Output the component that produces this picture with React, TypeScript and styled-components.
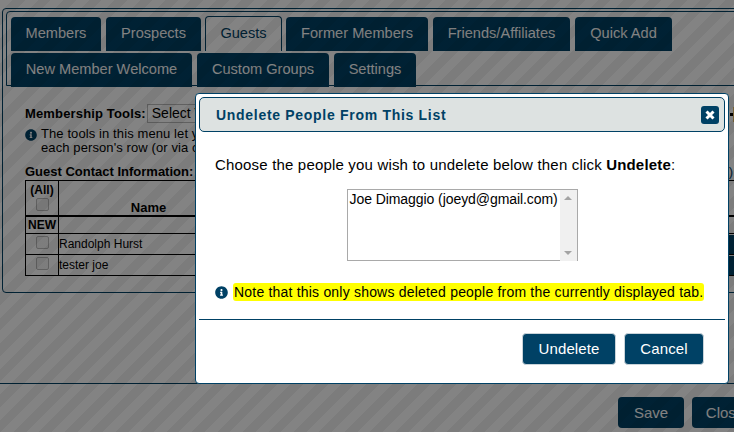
import React from 'react';
import styled, { createGlobalStyle } from 'styled-components';

const navy = '#004165';

const GlobalStyle = createGlobalStyle`
  html, body {
    margin: 0;
    padding: 0;
    width: 734px;
    height: 432px;
    overflow: hidden;
    background: #fff;
    font-family: "Liberation Sans", Arial, sans-serif;
  }
`;

const Page = styled.div`
  position: relative;
  width: 734px;
  height: 432px;
  overflow: hidden;
  box-sizing: border-box;
  padding-top: 8px;
`;

const OuterPanel = styled.div`
  margin-left: 2px;
  width: 760px;
  height: 285px;
  box-sizing: border-box;
  border: 1px solid ${navy};
  border-radius: 4px;
  padding: 2px 3px;
`;

const TabBar = styled.div`
  border: 1px solid ${navy};
  border-radius: 4px 4px 0 0;
  height: 75px;
  box-sizing: border-box;
  padding: 5px 4px 0;
  display: flex;
  flex-direction: column;
  gap: 2px;
`;

const TabRow = styled.div`
  display: flex;
  gap: 5px;
`;

const Tab = styled.div<{ $active?: boolean; $width: number }>`
  width: ${(p) => p.$width}px;
  height: ${(p) => (p.$active ? 35 : 34)}px;
  margin: ${(p) => (p.$active ? '-1px -1px 0 -1px' : '0')};
  box-sizing: border-box;
  display: flex;
  align-items: center;
  justify-content: center;
  padding-bottom: 2px;
  font-size: 14.6px;
  border-radius: 4px 4px 0 0;
  background: ${(p) => (p.$active ? '#fff' : navy)};
  color: ${(p) => (p.$active ? navy : '#fff')};
  border: ${(p) => (p.$active ? `1px solid ${navy}` : 'none')};
  border-bottom: none;
`;

const Content = styled.div`
  padding: 17px 0 0 19px;
  color: #000;
`;

const ToolsRow = styled.div`
  display: flex;
  align-items: center;
  height: 20px;
  font-size: 13px;
  font-weight: bold;
  letter-spacing: 0.15px;
`;

const FakeSelect = styled.div`
  margin-left: 1px;
  width: 100px;
  height: 17px;
  border: 1px solid #bbb;
  background: #fff;
  font-size: 14px;
  font-weight: normal;
  line-height: 17px;
  padding-left: 4px;
  letter-spacing: 0;
`;

const HelpText = styled.div`
  display: flex;
  gap: 4px;
  margin-top: 4px;
  font-size: 13px;
  line-height: 14px;
  letter-spacing: 0.1px;
  white-space: nowrap;
  svg {
    flex: none;
    margin-top: 2px;
  }
`;

const TableTitle = styled.div`
  margin-top: 9px;
  width: 708px;
  display: flex;
  justify-content: space-between;
  font-size: 13px;
  font-weight: bold;
  line-height: 16px;
`;

const TitleLink = styled.span`
  color: ${navy};
  font-weight: normal;
`;

const Table = styled.table`
  border-collapse: collapse;
  width: 720px;
  table-layout: fixed;
`;

const HeadCell = styled.th`
  border: 1px solid #000;
  border-bottom: 2px solid #000;
  height: 34px;
  padding: 0;
  font-size: 13px;
  line-height: 15px;
  vertical-align: bottom;
`;

const AllLabel = styled.div`
  font-size: 12px;
  line-height: 13px;
  margin-bottom: 1px;
`;

const Cell = styled.td<{ $center?: boolean; $bold?: boolean; $height: number }>`
  border: 1px solid #000;
  height: ${(p) => p.$height}px;
  padding: 0;
  text-align: ${(p) => (p.$center ? 'center' : 'left')};
  font-weight: ${(p) => (p.$bold ? 'bold' : 'normal')};
  font-size: 12px;
  line-height: 14px;
  vertical-align: ${(p) => (p.$center && !p.$bold ? 'top' : 'middle')};
`;

const Check = styled.span<{ $head?: boolean }>`
  display: block;
  width: 13px;
  height: 13px;
  margin: ${(p) => (p.$head ? '0 auto 4px' : '2px auto 0')};
  box-sizing: border-box;
  border: 1px solid #bbb;
  border-radius: 2px;
  background: #f4f4f4;
`;

const RowAction = styled.div`
  height: 19px;
  margin: 1px 0 0 0;
  background: ${navy};
`;

const PageFooter = styled.div`
  position: absolute;
  left: 0;
  right: 0;
  top: 383px;
  border-top: 1px solid ${navy};
  display: flex;
  gap: 8px;
  padding: 13px 0 0 618px;
`;

const FooterButton = styled.div<{ $width: number }>`
  flex: none;
  width: ${(p) => p.$width}px;
  height: 31px;
  background: ${navy};
  color: #fff;
  border-radius: 4px;
  font-size: 15px;
  display: flex;
  align-items: center;
  justify-content: center;
`;

const AddMark = styled.div`
  position: absolute;
  left: 730px;
  top: 113px;
  width: 8px;
  height: 3px;
  background: #000;
  &::after {
    content: '';
    position: absolute;
    left: 3px;
    top: -6px;
    width: 3px;
    height: 15px;
    background: #e6bd6a;
  }
`;

const Overlay = styled.div`
  position: absolute;
  inset: 0;
  background: repeating-linear-gradient(
    135deg,
    rgba(0, 0, 0, 0.485) 0 9px,
    rgba(0, 0, 0, 0.515) 9px 18px
  );
`;

const Modal = styled.div`
  position: absolute;
  left: 195px;
  top: 93px;
  width: 534px;
  height: 291px;
  box-sizing: border-box;
  background: #fff;
  border: 1px solid ${navy};
  border-radius: 4px;
  padding: 3px;
  display: flex;
  flex-direction: column;
`;

const ModalHeader = styled.div`
  height: 35px;
  flex: none;
  box-sizing: border-box;
  background: #dde2e1;
  border: 1px solid ${navy};
  border-radius: 5px;
  display: flex;
  align-items: center;
  justify-content: space-between;
  padding: 0 5px 0 16px;
`;

const ModalTitle = styled.div`
  color: ${navy};
  font-size: 14px;
  font-weight: bold;
  letter-spacing: 0.7px;
`;

const CloseButton = styled.div`
  width: 18px;
  height: 18px;
  background: ${navy};
  border-radius: 3px;
  display: flex;
  align-items: center;
  justify-content: center;
`;

const ModalBody = styled.div`
  flex: 1;
  padding: 24px 0 0 16px;
`;

const Prompt = styled.div`
  font-size: 15px;
  line-height: 18px;
  letter-spacing: 0.18px;
  color: #000;
`;

const ListWrap = styled.div`
  display: flex;
  justify-content: center;
  margin: 15px 0 0 -16px;
`;

const ListBox = styled.div`
  width: 231px;
  height: 72px;
  box-sizing: border-box;
  border: 1px solid #a9a9a9;
  border-right: none;
  display: flex;
  justify-content: space-between;
`;

const ListItem = styled.div`
  padding: 1px 0 0 2px;
  font-size: 14px;
  line-height: 16px;
  letter-spacing: -0.07px;
  color: #000;
  white-space: nowrap;
`;

const ScrollTrack = styled.div`
  flex: none;
  width: 18px;
  box-sizing: border-box;
  background: #f0f0f0;
  display: flex;
  flex-direction: column;
  justify-content: space-between;
  align-items: center;
  padding: 6px 0;
  margin-bottom: -1px;
  border-right: 1px solid #a9a9a9;
`;

const Arrow = styled.span<{ $down?: boolean }>`
  width: 0;
  height: 0;
  border-left: 4px solid transparent;
  border-right: 4px solid transparent;
  ${(p) => (p.$down ? 'border-top: 4px solid #a3a3a3;' : 'border-bottom: 4px solid #a3a3a3;')}
`;

const Note = styled.div`
  display: flex;
  align-items: center;
  gap: 6px;
  margin-top: 22px;
  font-size: 14px;
  line-height: 18px;
  color: #000;
  letter-spacing: 0.2px;
  white-space: nowrap;
  svg {
    flex: none;
  }
`;

const Highlight = styled.span`
  background: #ffff00;
  border-radius: 3px;
  padding: 0 1px;
  margin-left: -1px;
`;

const ModalFooter = styled.div`
  border-top: 1px solid ${navy};
  height: 61px;
  flex: none;
  box-sizing: border-box;
  display: flex;
  justify-content: flex-end;
  gap: 8px;
  padding: 13px 21px 0 0;
`;

const ModalButton = styled.div<{ $width: number }>`
  width: ${(p) => p.$width}px;
  height: 32px;
  box-sizing: border-box;
  background: ${navy};
  color: #fff;
  border: 1px solid #c9d3d9;
  border-radius: 4px;
  padding-bottom: 2px;
  font-size: 15px;
  letter-spacing: 0.1px;
  display: flex;
  align-items: center;
  justify-content: center;
`;

const InfoIcon = ({ size, color }: { size: number; color: string }) => (
  <svg width={size} height={size} viewBox="0 0 512 512" fill={color}>
    <path d="M256 8C119 8 8 119 8 256s111 248 248 248 248-111 248-248S393 8 256 8zm0 110c23 0 42 19 42 42s-19 42-42 42-42-19-42-42 19-42 42-42zm56 254c0 7-5 12-12 12h-88c-7 0-12-5-12-12v-24c0-7 5-12 12-12h12v-64h-12c-7 0-12-5-12-12v-24c0-7 5-12 12-12h64c7 0 12 5 12 12v100h12c7 0 12 5 12 12v24z" />
  </svg>
);

const topTabs = [
  { label: 'Members', width: 90 },
  { label: 'Prospects', width: 95 },
  { label: 'Guests', width: 77, active: true },
  { label: 'Former Members', width: 142 },
  { label: 'Friends/Affiliates', width: 137 },
  { label: 'Quick Add', width: 97 },
];

const lowerTabs = [
  { label: 'New Member Welcome', width: 181 },
  { label: 'Custom Groups', width: 132 },
  { label: 'Settings', width: 82 },
];

export default function App() {
  return (
    <Page>
      <GlobalStyle />
      <OuterPanel>
        <TabBar>
          <TabRow>
            {topTabs.map((t) => (
              <Tab key={t.label} $width={t.width} $active={t.active}>
                {t.label}
              </Tab>
            ))}
          </TabRow>
          <TabRow>
            {lowerTabs.map((t) => (
              <Tab key={t.label} $width={t.width}>
                {t.label}
              </Tab>
            ))}
          </TabRow>
        </TabBar>
        <Content>
          <ToolsRow>
            Membership Tools:
            <FakeSelect>Select Tool</FakeSelect>
          </ToolsRow>
          <HelpText>
            <InfoIcon size={12} color={navy} />
            <div>
              The tools in this menu let you
              <br />
              each person's row (or via custom
            </div>
          </HelpText>
          <TableTitle>
            Guest Contact Information:
            <TitleLink>)</TitleLink>
          </TableTitle>
          <Table>
            <colgroup>
              <col style={{ width: 33 }} />
              <col style={{ width: 180 }} />
              <col style={{ width: 485 }} />
              <col />
            </colgroup>
            <thead>
              <tr>
                <HeadCell>
                  <AllLabel>(All)</AllLabel>
                  <Check $head />
                </HeadCell>
                <HeadCell>Name</HeadCell>
                <HeadCell />
                <HeadCell />
              </tr>
            </thead>
            <tbody>
              <tr>
                <Cell $center $bold $height={16}>NEW</Cell>
                <Cell $height={16} />
                <Cell $height={16} />
                <Cell $height={16} />
              </tr>
              <tr>
                <Cell $center $height={20}><Check /></Cell>
                <Cell $height={20}>Randolph Hurst</Cell>
                <Cell $height={20} />
                <Cell $height={20}><RowAction /></Cell>
              </tr>
              <tr>
                <Cell $center $height={20}><Check /></Cell>
                <Cell $height={20}>tester joe</Cell>
                <Cell $height={20} />
                <Cell $height={20}><RowAction /></Cell>
              </tr>
            </tbody>
          </Table>
        </Content>
      </OuterPanel>
      <AddMark />
      <PageFooter>
        <FooterButton $width={66}>Save</FooterButton>
        <FooterButton $width={66}>Close</FooterButton>
      </PageFooter>
      <Overlay />
      <Modal>
        <ModalHeader>
          <ModalTitle>Undelete People From This List</ModalTitle>
          <CloseButton>
            <svg width="12" height="12" viewBox="0 0 12 12">
              <path d="M2.5 2.5l7 7M9.5 2.5l-7 7" stroke="#fff" strokeWidth="3" />
            </svg>
          </CloseButton>
        </ModalHeader>
        <ModalBody>
          <Prompt>
            Choose the people you wish to undelete below then click <b>Undelete</b>:
          </Prompt>
          <ListWrap>
            <ListBox>
              <ListItem>Joe Dimaggio (joeyd@gmail.com)</ListItem>
              <ScrollTrack>
                <Arrow />
                <Arrow $down />
              </ScrollTrack>
            </ListBox>
          </ListWrap>
          <Note>
            <InfoIcon size={13} color={navy} />
            <Highlight>Note that this only shows deleted people from the currently displayed tab.</Highlight>
          </Note>
        </ModalBody>
        <ModalFooter>
          <ModalButton $width={94}>Undelete</ModalButton>
          <ModalButton $width={80}>Cancel</ModalButton>
        </ModalFooter>
      </Modal>
    </Page>
  );
}
